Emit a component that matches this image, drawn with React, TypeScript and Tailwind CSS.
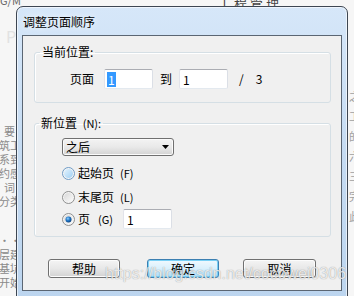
import React from "react"

function Radio({ state }: { state: "hover" | "off" | "on" }) {
  const ring = state === "hover" ? "#6e9bc6" : "#8e8f8f"
  return (
    <svg width="13" height="13" viewBox="0 0 13 13">
      <defs>
        <linearGradient id={`rg-${state}`} x1="0" y1="0" x2="1" y2="1">
          {state === "hover" ? (
            <>
              <stop offset="0" stopColor="#e4f3fd" />
              <stop offset="1" stopColor="#9fd0f4" />
            </>
          ) : (
            <>
              <stop offset="0" stopColor="#d8d8d8" />
              <stop offset="1" stopColor="#fbfbfb" />
            </>
          )}
        </linearGradient>
        <radialGradient id="dot" cx="0.4" cy="0.35" r="0.7">
          <stop offset="0" stopColor="#8fd0ff" />
          <stop offset="0.5" stopColor="#1f74c4" />
          <stop offset="1" stopColor="#0b3f7a" />
        </radialGradient>
      </defs>
      <circle cx="6.5" cy="6.5" r="6" fill="#f4f4f4" stroke={ring} strokeWidth="1" />
      <circle cx="6.5" cy="6.5" r="4.5" fill={`url(#rg-${state})`} />
      {state === "on" && <circle cx="6.5" cy="6.5" r="3" fill="url(#dot)" />}
    </svg>
  )
}

function TextBox({ value, selected }: { value: string; selected?: boolean }) {
  return (
    <div className="h-[20px] w-[49px] rounded-[2px] border border-[#abadb3] border-l-[#e2e3ea] border-r-[#dbdfe6] border-b-[#e3e9ef] bg-white pl-[2px] flex items-center">
      <span
        className={
          selected
            ? "bg-[#3399ff] text-white px-[1px] leading-[15px]"
            : "text-black px-[1px] leading-[15px]"
        }
      >
        {value}
      </span>
    </div>
  )
}

function Button({ label, isDefault }: { label: string; isDefault?: boolean }) {
  return (
    <button
      className={
        isDefault
          ? "h-[19px] rounded-[3px] border border-[#3c7fb1] bg-gradient-to-b from-[#f0f9fe] via-[#d9f0fc] to-[#a9dbf6] text-[12px] text-black leading-none shadow-[inset_0_0_0_1px_#78d0f5]"
          : "h-[19px] rounded-[3px] border border-[#707070] bg-gradient-to-b from-[#f4f4f4] via-[#e8e8e8] to-[#d2d2d2] text-[12px] text-black leading-none shadow-[inset_0_0_0_1px_#fcfcfc]"
      }
    >
      {label}
    </button>
  )
}

export default function App() {
  const leftLines = [
    { top: 125, text: "  要" },
    { top: 139, text: "筑工" },
    { top: 153, text: "系到" },
    { top: 167, text: "约感" },
    { top: 181, text: "  词" },
    { top: 195, text: "分类" },
    { top: 234, text: "···" },
    { top: 248, text: "层建" },
    { top: 262, text: "基坑" },
    { top: 276, text: "开始" },
  ]

  return (
    <div className="relative w-[354px] h-[296px] overflow-hidden bg-[#f6f6f6] font-['Noto_Sans_CJK_SC',sans-serif] text-[12px]">
      {/* document behind the dialog */}
      <div className="absolute left-0 top-[-8px] text-[11px] text-[#666]">G/M</div>
      <div className="absolute left-[218px] top-[-7px] text-[13px] tracking-[3px] text-[#444]">工程管理</div>
      <div className="absolute left-[6px] top-[24px] text-[16px] text-[#e2e2e2]">P</div>
      {leftLines.map((l) => (
        <div
          key={l.top}
          className="absolute left-[-1px] whitespace-pre text-[11px] leading-[13px] text-[#8a8a8a]"
          style={{ top: l.top }}
        >
          {l.text}
        </div>
      ))}
      <div className="absolute left-[349px] top-[90px] flex flex-col gap-[8px] text-[11px] leading-[12px] text-[#a0a0a0]">
        <span>之</span>
        <span>工</span>
        <span>的</span>
        <span>六</span>
        <span>三</span>
        <span>完</span>
        <span>此</span>
      </div>

      {/* dialog window */}
      <div className="absolute left-[16px] top-[6px] w-[332px] h-[300px] rounded-t-[7px] border border-[#3d4652] bg-gradient-to-b from-[#d6e7f9] via-[#c5dbf2] to-[#bcd5ef] pl-[5px] pr-[5px] pt-[28px] shadow-[inset_0_0_0_1px_rgba(255,255,255,0.6)]">
        <div className="absolute left-[6px] top-[8px] text-[12px] leading-[14px] text-black [text-shadow:0_0_6px_#ffffff]">
          调整页面顺序
        </div>

        <div className="h-[256px] border border-[#5b6673] bg-[#f0f0f0] flex flex-col">
          <fieldset className="ml-[11px] mt-[10px] w-[297px] rounded-[3px] border border-[#d5dfe5] pl-[35px] pt-[11px] pb-[13px] shadow-[inset_1px_1px_0_#ffffff]">
            <legend className="-ml-[30px] px-[2px] leading-[12px] text-black">当前位置:</legend>
            <div className="flex items-center h-[20px]">
              <span>页面</span>
              <div className="ml-[10px]">
                <TextBox value="1" selected />
              </div>
              <span className="ml-[7px]">到</span>
              <div className="ml-[7px]">
                <TextBox value="1" />
              </div>
              <span className="ml-[11px]">/</span>
              <span className="ml-[12px]">3</span>
            </div>
          </fieldset>

          <fieldset className="ml-[11px] mt-[14px] w-[297px] rounded-[3px] border border-[#d5dfe5] pl-[27px] pt-[9px] pb-[7px] shadow-[inset_1px_1px_0_#ffffff]">
            <legend className="-ml-[23px] px-[2px] leading-[12px] text-black">
              新位置 <span className="ml-[3px] text-[11px]">(N):</span>
            </legend>
            <div className="h-[18px] w-[112px] rounded-[3px] border border-[#707070] bg-gradient-to-b from-[#f3f3f3] via-[#e9e9e9] to-[#d3d3d3] flex items-center justify-between pl-[3px] pr-[4px] shadow-[inset_0_0_0_1px_#fbfbfb]">
              <span className="leading-none">之后</span>
              <svg width="7" height="4" viewBox="0 0 7 4">
                <path d="M0 0h7L3.5 4z" fill="#000" />
              </svg>
            </div>
            <div className="mt-[10px] flex items-center h-[14px]">
              <Radio state="hover" />
              <span className="ml-[3px]">起始页</span>
              <span className="ml-[6px] text-[11px]">(F)</span>
            </div>
            <div className="mt-[10px] flex items-center h-[14px]">
              <Radio state="off" />
              <span className="ml-[3px]">末尾页</span>
              <span className="ml-[6px] text-[11px]">(L)</span>
            </div>
            <div className="mt-[5px] flex items-center h-[20px]">
              <Radio state="on" />
              <span className="ml-[3px]">页</span>
              <span className="ml-[8px] text-[11px]">(G)</span>
              <div className="ml-[10px]">
                <TextBox value="1" />
              </div>
            </div>
          </fieldset>

          <div className="mt-[22px] ml-[25px] flex">
            <div className="w-[72px] flex flex-col">
              <Button label="帮助" />
            </div>
            <div className="ml-[27px] w-[72px] flex flex-col">
              <Button label="确定" isDefault />
            </div>
            <div className="ml-[24px] w-[73px] flex flex-col">
              <Button label="取消" />
            </div>
          </div>
        </div>
      </div>

      {/* watermark */}
      <div className="absolute left-[105px] top-[262px] font-['Liberation_Sans',sans-serif] text-[16px] text-white/80 [text-shadow:0_0_1px_rgba(0,0,0,0.45)]">
        https://blog.csdn.net/cocowei0306
      </div>
    </div>
  )
}
